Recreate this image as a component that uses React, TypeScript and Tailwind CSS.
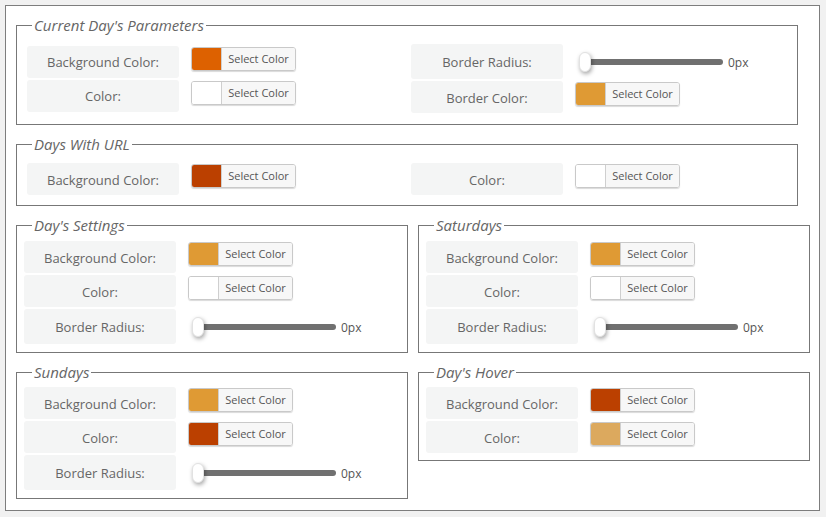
import React from "react";

type Item =
  | { kind: "color"; label: string; swatch: string }
  | { kind: "slider"; label: string };

const font = { fontFamily: '"Open Sans", "Noto Sans", sans-serif' };

function RowLabel({ text, tall }: { text: string; tall?: boolean }) {
  return (
    <div
      className={`${tall ? "h-[35px]" : "h-[32px]"} w-[152px] shrink-0 rounded-[3px] bg-[#f4f5f5] flex items-center justify-center pt-[3px] text-[13px] text-[#666]`}
    >
      {text}
    </div>
  );
}

function ColorButton({ swatch }: { swatch: string }) {
  return (
    <div className="ml-[12px] mt-[1px] flex h-[24px] w-[105px] overflow-hidden rounded-[3px] border border-[#c9c9c9] shadow-[0_1px_1px_rgba(0,0,0,0.15)]">
      <div className={`w-[30px] border-r border-[#cfcfcf] ${swatch}`} />
      <div className="flex flex-1 items-center justify-center bg-[#f7f7f7] pt-[1px] text-[11px] text-[#555]">
        Select Color
      </div>
    </div>
  );
}

function Slider() {
  return (
    <div className="ml-[16px] flex items-center pt-[1px]">
      <div className="relative h-[20px] w-[144px]">
        <div className="absolute left-0 right-0 top-[7px] h-[6px] rounded-full bg-[#707070]" />
        <div className="absolute left-0 top-0 h-[20px] w-[12px] rounded-[6px] border border-[#e2e2e2] bg-white shadow-[1px_2px_4px_rgba(0,0,0,0.35)]" />
      </div>
      <span className="ml-[5px] pt-[2px] text-[12px] text-[#555]">0px</span>
    </div>
  );
}

function Row({ item }: { item: Item }) {
  if (item.kind === "slider") {
    return (
      <div className="flex items-center">
        <RowLabel text={item.label} tall />
        <Slider />
      </div>
    );
  }
  return (
    <div className="flex items-start">
      <RowLabel text={item.label} />
      <ColorButton swatch={item.swatch} />
    </div>
  );
}

function Column({ items }: { items: Item[] }) {
  return (
    <div className="flex flex-col gap-[2px]">
      {items.map((it, i) => (
        <Row key={i} item={it} />
      ))}
    </div>
  );
}

function Legend({ title }: { title: string }) {
  return (
    <legend className="ml-[15px] px-[2px] text-[15px] italic leading-[20px] text-[#666]">
      {title}
    </legend>
  );
}

const ORANGE = "bg-[#df9a34]";
const RUST = "bg-[#bb4000]";

export default function App() {
  return (
    <div className="min-h-screen bg-[#f1f1f1] pl-[5px] pt-[5px]" style={font}>
      <div className="h-[506px] w-[815px] border border-[#7d7d7d] bg-white pl-[10px] pt-[9px]">
        {/* Current Day's Parameters */}
        <fieldset className="w-[782px] border border-[#777]">
          <Legend title="Current Day's Parameters" />
          <div className="grid grid-cols-[384px_1fr] items-center pb-[11px] pl-[10px] pt-[9px]">
            <Column
              items={[
                { kind: "color", label: "Background Color:", swatch: "bg-[#dd6100]" },
                { kind: "color", label: "Color:", swatch: "bg-white" },
              ]}
            />
            <Column
              items={[
                { kind: "slider", label: "Border Radius:" },
                { kind: "color", label: "Border Color:", swatch: ORANGE },
              ]}
            />
          </div>
        </fieldset>

        {/* Days With URL */}
        <fieldset className="mt-[9px] w-[782px] border border-[#777]">
          <Legend title="Days With URL" />
          <div className="grid grid-cols-[384px_1fr] items-center pb-[10px] pl-[10px] pt-[9px]">
            <Column items={[{ kind: "color", label: "Background Color:", swatch: RUST }]} />
            <Column items={[{ kind: "color", label: "Color:", swatch: "bg-white" }]} />
          </div>
        </fieldset>

        <div className="mt-[9px] flex items-start gap-[10px]">
          <div className="flex flex-col gap-[9px]">
            <fieldset className="w-[392px] border border-[#777]">
              <Legend title="Day's Settings" />
              <div className="pb-[8px] pl-[7px] pt-[6px]">
                <Column
                  items={[
                    { kind: "color", label: "Background Color:", swatch: ORANGE },
                    { kind: "color", label: "Color:", swatch: "bg-white" },
                    { kind: "slider", label: "Border Radius:" },
                  ]}
                />
              </div>
            </fieldset>
            <fieldset className="w-[392px] border border-[#777]">
              <Legend title="Sundays" />
              <div className="pb-[8px] pl-[7px] pt-[5px]">
                <Column
                  items={[
                    { kind: "color", label: "Background Color:", swatch: ORANGE },
                    { kind: "color", label: "Color:", swatch: RUST },
                    { kind: "slider", label: "Border Radius:" },
                  ]}
                />
              </div>
            </fieldset>
          </div>
          <div className="flex flex-col gap-[9px]">
            <fieldset className="w-[392px] border border-[#777]">
              <Legend title="Saturdays" />
              <div className="pb-[8px] pl-[7px] pt-[6px]">
                <Column
                  items={[
                    { kind: "color", label: "Background Color:", swatch: ORANGE },
                    { kind: "color", label: "Color:", swatch: "bg-white" },
                    { kind: "slider", label: "Border Radius:" },
                  ]}
                />
              </div>
            </fieldset>
            <fieldset className="w-[392px] border border-[#777]">
              <Legend title="Day's Hover" />
              <div className="pb-[7px] pl-[7px] pt-[5px]">
                <Column
                  items={[
                    { kind: "color", label: "Background Color:", swatch: RUST },
                    { kind: "color", label: "Color:", swatch: "bg-[#dca95e]" },
                  ]}
                />
              </div>
            </fieldset>
          </div>
        </div>
      </div>
    </div>
  );
}
